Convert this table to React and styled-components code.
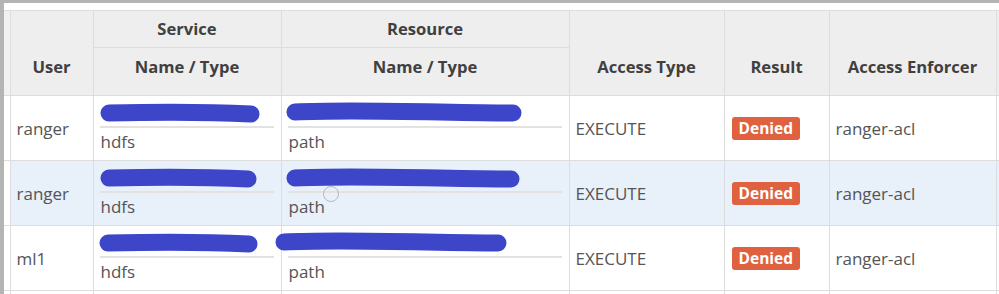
import React from "react";
import styled, { createGlobalStyle } from "styled-components";

const Global = createGlobalStyle`
  html, body { margin: 0; padding: 0; }
  body {
    background: #b4b4b4;
    font-family: "Open Sans", "Noto Sans", sans-serif;
    overflow: hidden;
  }
`;

const Frame = styled.div`
  margin: 3px 0 0 4px;
  background: #ffffff;
  padding-top: 7px;
  height: 300px;
  position: relative;
  overflow: hidden;
`;

const Table = styled.table`
  border-collapse: collapse;
  table-layout: fixed;
  width: 1040px;
  font-size: 17px;
  color: #555555;
`;

const Th = styled.th`
  background: #eeeeee;
  border: 1px solid #dddddd;
  color: #404040;
  font-weight: 700;
  font-size: 16.6px;
  line-height: 24px;
  text-align: center;
  vertical-align: ${(p) => (p.$group ? "middle" : "bottom")};
  padding: ${(p) => (p.$group ? "0" : "0 0 16px")};
  height: ${(p) => p.$h || 36}px;
`;

const Gutter = styled.th`
  background: #f1f1f1;
  border: 1px solid #dddddd;
  border-left: none;
  padding: 0;
`;

const GutterCell = styled.td`
  background: #ffffff;
  border: 1px solid #dddddd;
  border-left: none;
  padding: 0;
`;

const Tr = styled.tr`
  background: ${(p) => (p.$hover ? "#e8f0fa" : "#ffffff")};
`;

const Td = styled.td`
  border: 1px solid #dddddd;
  padding: 0 7px 0 6px;
  height: 64px;
  vertical-align: middle;
  white-space: nowrap;
  font-size: 17px;
  color: #555555;
`;

const Stack = styled.div`
  display: flex;
  flex-direction: column;
`;

const NameLine = styled.div`
  height: 26px;
  border-bottom: 2px solid #e2e2e2;
  display: flex;
  align-items: center;
  overflow: visible;
`;

const TypeLine = styled.div`
  line-height: 28px;
  height: 28px;
  padding-left: 1px;
`;

const Badge = styled.span`
  display: inline-block;
  background: #e0613f;
  color: #ffffff;
  font-weight: 700;
  font-size: 15.5px;
  line-height: 23px;
  padding: 0 7px;
  border-radius: 3px;
  margin-left: 1px;
`;

const Cursor = styled.div`
  position: absolute;
  left: 319px;
  top: 183px;
  width: 14px;
  height: 14px;
  border: 1px solid #b8b8b8;
  border-radius: 50%;
`;

const ScribbleSvg = styled.svg`
  display: block;
  overflow: visible;
`;

function Scribble({ x1, x2, dy = 0, tilt = 0 }) {
  const w = x2 - x1;
  return (
    <ScribbleSvg width={w} height={26} style={{ marginLeft: x1 }}>
      <path
        d={`M9 ${13 + dy} C ${w * 0.3} ${12 + dy - tilt}, ${w * 0.7} ${12 + dy + tilt}, ${w - 9} ${14 + dy}`}
        stroke="#3d46c9"
        strokeWidth="17"
        strokeLinecap="round"
        fill="none"
      />
    </ScribbleSvg>
  );
}

const rows = [
  { user: "ranger", s: [0, 160, 0], r: [-2, 236, -1], hover: false },
  { user: "ranger", s: [0, 157, 0], r: [-2, 234, 0], hover: true },
  { user: "ml1", s: [-1, 159, 0], r: [-13, 232, -1], hover: false },
];

export default function App() {
  return (
    <>
      <Global />
      <Frame>
        <Table>
          <colgroup>
            <col style={{ width: 6 }} />
            <col style={{ width: 83 }} />
            <col style={{ width: 188 }} />
            <col style={{ width: 288 }} />
            <col style={{ width: 155 }} />
            <col style={{ width: 105 }} />
            <col style={{ width: 167 }} />
            <col style={{ width: 48 }} />
          </colgroup>
          <thead>
            <tr>
              <Gutter rowSpan={2} />
              <Th rowSpan={2}>User</Th>
              <Th $group $h={36}>Service</Th>
              <Th $group $h={36}>Resource</Th>
              <Th rowSpan={2}>Access Type</Th>
              <Th rowSpan={2}>Result</Th>
              <Th rowSpan={2}>Access Enforcer</Th>
              <Th rowSpan={2} />
            </tr>
            <tr>
              <Th $h={31}>Name / Type</Th>
              <Th $h={31}>Name / Type</Th>
            </tr>
          </thead>
          <tbody>
            {rows.map((row, i) => (
              <Tr key={i} $hover={row.hover}>
                <GutterCell />
                <Td>{row.user}</Td>
                <Td>
                  <Stack>
                    <NameLine>
                      <Scribble x1={row.s[0]} x2={row.s[0] + row.s[1]} dy={row.s[2]} />
                    </NameLine>
                    <TypeLine>hdfs</TypeLine>
                  </Stack>
                </Td>
                <Td>
                  <Stack>
                    <NameLine>
                      <Scribble x1={row.r[0]} x2={row.r[0] + row.r[1]} dy={row.r[2]} tilt={2} />
                    </NameLine>
                    <TypeLine>path</TypeLine>
                  </Stack>
                </Td>
                <Td>EXECUTE</Td>
                <Td>
                  <Badge>Denied</Badge>
                </Td>
                <Td>ranger-acl</Td>
                <Td />
              </Tr>
            ))}
            <Tr>
              <GutterCell />
              <Td />
              <Td />
              <Td />
              <Td />
              <Td />
              <Td />
              <Td />
            </Tr>
          </tbody>
        </Table>
        <Cursor />
      </Frame>
    </>
  );
}
